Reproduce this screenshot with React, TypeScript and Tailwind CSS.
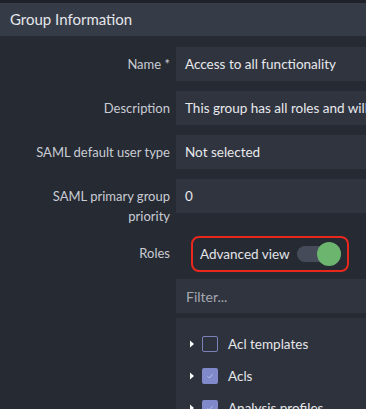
import { useState } from "react";

const font = { fontFamily: '"Source Sans Pro", Lato, "Noto Sans", sans-serif' };

function Field({ label, value }: { label: string; value: string }) {
  return (
    <div className="flex items-start pl-[30px]">
      <div className="w-[146px] shrink-0 pt-[7px] pr-[6px] text-right text-[13px] leading-[20px] text-[#c9ccd3]">
        {label}
      </div>
      <div className="flex h-[34px] flex-1 items-center whitespace-nowrap overflow-hidden bg-[#30343f] pl-[9px] text-[13.5px] text-[#e8e9ec]">
        {value}
      </div>
    </div>
  );
}

function Caret() {
  return (
    <svg width="6" height="10" viewBox="0 0 6 10" className="shrink-0">
      <path d="M1 1.5 L5 5 L1 8.5 Z" fill="#ffffff" />
    </svg>
  );
}

function Checkbox({ checked }: { checked: boolean }) {
  return checked ? (
    <div className="flex h-[16px] w-[16px] items-center justify-center rounded-[2px] bg-[#8089c9]">
      <svg width="10" height="10" viewBox="0 0 10 10">
        <path d="M2.5 5.2 L4.3 7 L7.6 3.2" fill="none" stroke="#b7bde6" strokeWidth="1" />
      </svg>
    </div>
  ) : (
    <div className="h-[16px] w-[16px] rounded-[2px] border border-[#7c82b8]" />
  );
}

export default function App() {
  const [advanced, setAdvanced] = useState(true);
  const items = [
    { name: "Acl templates", checked: false },
    { name: "Acls", checked: true },
    { name: "Analysis profiles", checked: true },
  ];

  return (
    <div className="h-[409px] w-[366px] overflow-hidden bg-[#262a33]" style={font}>
      <div className="h-[3px] bg-[#1f2229]" />
      <div className="flex h-[33px] items-center bg-[#363b48] px-[10px] text-[15px] text-[#e4e6ea]">
        Group Information
      </div>

      <div className="flex flex-col gap-[10px] pt-[11px]">
        <Field label="Name *" value="Access to all functionality" />
        <Field label="Description" value="This group has all roles and will be granted" />
        <Field label="SAML default user type" value="Not selected" />
        <Field label="SAML primary group priority" value="0" />
      </div>

      {/* priority label hangs 13px below its input */}
      <div className="mt-[10px] flex items-center pl-[30px]">
        <div className="w-[146px] shrink-0 pr-[6px] text-right text-[13px] text-[#c9ccd3]">
          Roles
        </div>
        <div className="ml-[15px] flex h-[36px] w-[158px] items-center rounded-[8px] border-2 border-[#e8281c] pl-[7px]">
          <span className="text-[13.5px] text-[#e2e4e8]">Advanced view</span>
          <button
            onClick={() => setAdvanced(!advanced)}
            className="relative ml-[7px] h-[16px] w-[44px] rounded-full bg-[#454b59]"
          >
            <span
              className={
                advanced
                  ? "absolute right-0 top-1/2 h-[24px] w-[24px] -translate-y-1/2 rounded-full bg-[#6cb56e]"
                  : "absolute left-0 top-1/2 h-[24px] w-[24px] -translate-y-1/2 rounded-full bg-[#9aa0ab]"
              }
            />
          </button>
        </div>
      </div>

      <div className="ml-[176px] mt-[7px] flex h-[34px] items-center bg-[#30343f] pl-[10px] text-[14px] text-[#a4a8b1]">
        Filter...
      </div>

      <div className="ml-[176px] mt-[5px] flex h-[100px] flex-col gap-[16px] bg-[#2e323d] pl-[13px] pt-[18px]">
        {items.map((it) => (
          <div key={it.name} className="flex h-[16px] items-center">
            <Caret />
            <div className="ml-[7px]">
              <Checkbox checked={it.checked} />
            </div>
            <span className="ml-[10px] text-[13.5px] text-[#e6e7ea]">{it.name}</span>
          </div>
        ))}
      </div>
    </div>
  );
}
